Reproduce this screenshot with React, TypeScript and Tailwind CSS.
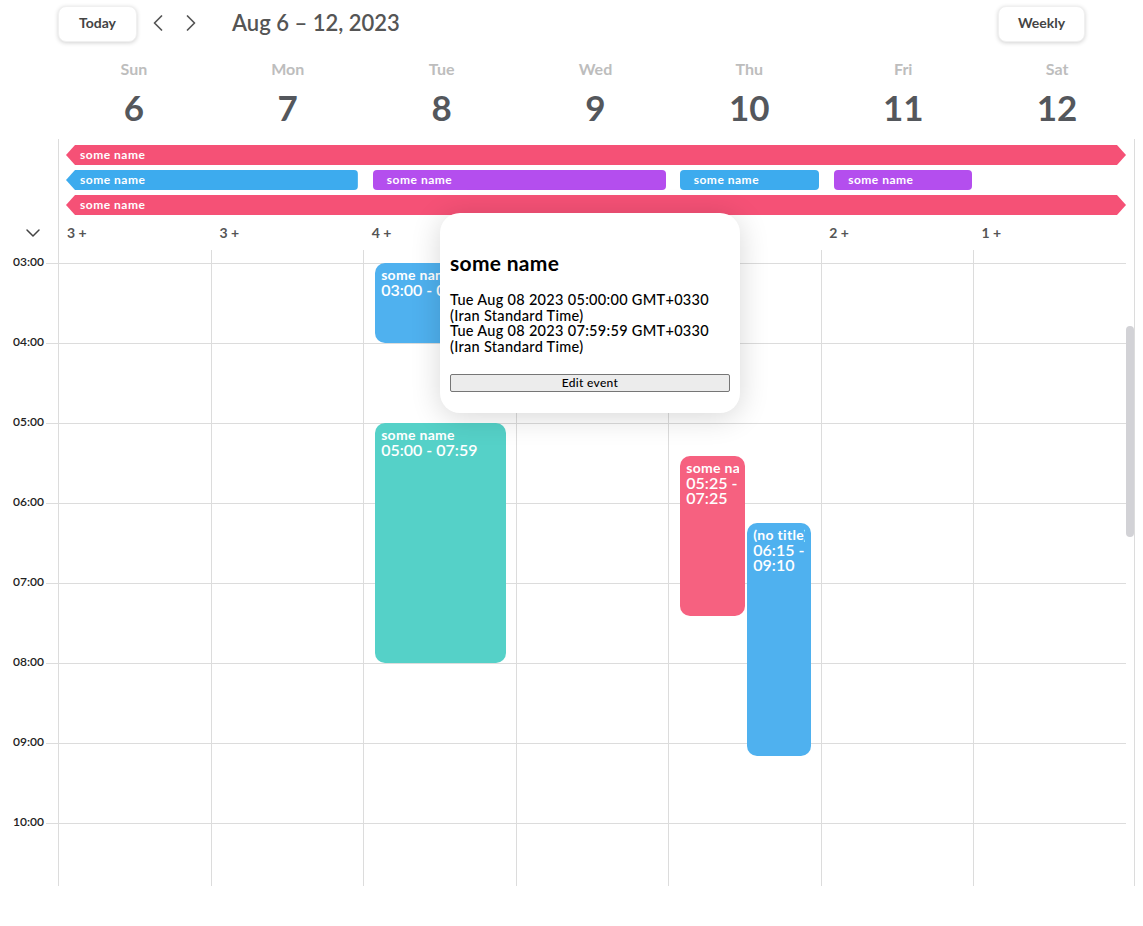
import { useLayoutEffect, useRef } from 'react'
import { ChevronDown, ChevronLeft, ChevronRight } from 'lucide-react'

const days = [
  { name: 'Sun', date: 6 },
  { name: 'Mon', date: 7 },
  { name: 'Tue', date: 8 },
  { name: 'Wed', date: 9 },
  { name: 'Thu', date: 10 },
  { name: 'Fri', date: 11 },
  { name: 'Sat', date: 12 },
]

const moreCounts = [3, 3, 4, 3, 3, 2, 1]

const hours = Array.from({ length: 24 }, (_, i) => `${String(i).padStart(2, '0')}:00`)

interface CalEvent {
  day: number
  title: string
  start: string
  end: string
  color: string
  pos: string
}

const events: CalEvent[] = [
  { day: 2, title: 'some name', start: '03:00', end: '03:59', color: 'bg-[#4fb1ef]', pos: 'left-[11px] right-[10px]' },
  { day: 2, title: 'some name', start: '05:00', end: '07:59', color: 'bg-[#55d1c8]', pos: 'left-[11px] right-[10px]' },
  { day: 4, title: 'some name', start: '05:25', end: '07:25', color: 'bg-[#f66180]', pos: 'left-[11px] w-[65px]' },
  { day: 4, title: '(no title)', start: '06:15', end: '09:10', color: 'bg-[#4fb1ef]', pos: 'left-[78px] right-[10px]' },
]

const HOUR = 80
const toMin = (t: string) => {
  const [h, m] = t.split(':').map(Number)
  return h * 60 + m
}

// arrow ends for multi-week all-day events
const bothArrows =
  '[clip-path:polygon(9px_0,calc(100%_-_9px)_0,100%_50%,calc(100%_-_9px)_100%,9px_100%,0_50%)]'
const leftArrow = '[clip-path:polygon(9px_0,100%_0,100%_100%,9px_100%,0_50%)]'

export default function App() {
  const scrollRef = useRef<HTMLDivElement>(null)

  useLayoutEffect(() => {
    if (scrollRef.current) scrollRef.current.scrollTop = 227
  }, [])

  return (
    <div className="relative w-[1143px] h-[926px] bg-white font-['Lato','Noto_Sans',sans-serif] text-[#555]">
      {/* Header */}
      <div className="flex items-center h-12 pl-[58px] pr-[58px]">
        <button className="w-[79px] h-9 pb-[3px] rounded-lg bg-white shadow-[0_1px_4px_rgba(0,0,0,0.18)] border border-[#f0f0f0] text-[14px] font-bold text-[#444]">
          Today
        </button>
        <ChevronLeft size={28} strokeWidth={1.5} className="ml-[7px] -mt-[2px] text-[#555]" />
        <ChevronRight size={28} strokeWidth={1.5} className="ml-[5px] -mt-[2px] text-[#555]" />
        <h1 className="ml-[27px] -mt-[3px] text-[22px] font-semibold text-[#555]">Aug 6 – 12, 2023</h1>
        <button className="ml-auto w-[87px] h-9 pb-[3px] rounded-lg bg-white shadow-[0_1px_4px_rgba(0,0,0,0.18)] border border-[#f0f0f0] text-[14px] font-bold text-[#444]">
          Weekly
        </button>
      </div>

      {/* Day headings */}
      <div className="w-[1134px] pl-[57px] grid grid-cols-7 pt-[11px] pb-[12px]">
        {days.map((d) => (
          <div key={d.name} className="flex flex-col items-center">
            <span className="text-[16px] leading-5 font-bold text-[#bdbdbd]">{d.name}</span>
            <span className="mt-[8px] text-[35px] leading-10 font-bold text-[#54575c]">{d.date}</span>
          </div>
        ))}
      </div>

      <div className="w-[1135px] border-r border-[#dcdcdc]">
        {/* All-day events */}
        <div className="flex">
          <div className="w-[58px] shrink-0 flex flex-col justify-end">
            <div className="h-[35px] flex items-center justify-center pl-2">
              <ChevronDown size={24} strokeWidth={1.5} className="text-[#444]" />
            </div>
          </div>
          <div className="flex-1 border-l border-[#dcdcdc] pr-2 pt-1.5">
            <div className="grid grid-cols-7 gap-y-[5px] text-[12px] tracking-[0.5px] font-bold text-white">
              <div className={`col-span-7 ml-[7px] h-5 flex items-center pl-[14px] bg-[#f55176] ${bothArrows}`}>
                some name
              </div>
              <div className={`col-span-2 ml-[7px] mr-[6px] h-5 flex items-center pl-[14px] bg-[#3dabee] rounded-r-[4px] ${leftArrow}`}>
                some name
              </div>
              <div className="col-span-2 ml-[9px] mr-[3px] h-5 flex items-center pl-[14px] bg-[#b44eee] rounded-[4px]">
                some name
              </div>
              <div className="ml-[11px] mr-[2px] h-5 flex items-center pl-[14px] bg-[#3dabee] rounded-[4px]">
                some name
              </div>
              <div className="ml-[13px] mr-[2px] h-5 flex items-center pl-[14px] bg-[#b44eee] rounded-[4px]">
                some name
              </div>
              <div className="col-span-1" />
              <div className={`col-span-7 ml-[7px] h-5 flex items-center pl-[14px] bg-[#f55176] ${bothArrows}`}>
                some name
              </div>
            </div>
            <div className="grid grid-cols-7 h-[35px]">
              {moreCounts.map((n, i) => (
                <div key={i} className="pl-[8px] flex items-center text-[14px] font-bold text-[#555]">
                  {n} +
                </div>
              ))}
            </div>
          </div>
        </div>

        {/* Time grid */}
        <div className="flex h-[636px]">
          <div ref={scrollRef} className="w-[1126px] h-full overflow-hidden">
            <div className="flex">
              <div className="w-[58px] shrink-0">
                {hours.map((h) => (
                  <div key={h} className="h-20 flex justify-end items-start">
                    <span className="-mt-[8px] mr-[2px] text-[12px] leading-[14px] font-semibold text-[#222]">{h}</span>
                    <div className="w-3 h-px bg-[#dcdcdc]" />
                  </div>
                ))}
              </div>
              <div className="flex-1 grid grid-cols-7">
                {days.map((d, di) => (
                  <div key={d.name} className="relative border-l border-[#dcdcdc]">
                    {hours.map((h) => (
                      <div key={h} className="h-20 border-t border-[#dcdcdc]" />
                    ))}
                    {events
                      .filter((e) => e.day === di)
                      .map((e, i) => {
                        const s = toMin(e.start)
                        const en = toMin(e.end) + (e.end.endsWith(':59') ? 1 : 0)
                        return (
                          <div
                            key={i}
                            className={`absolute ${e.pos} ${e.color} rounded-[10px] overflow-hidden px-1.5 pt-[5px] text-white`}
                            style={{ top: (s / 60) * HOUR, height: ((en - s) / 60) * HOUR }}
                          >
                            <div className="whitespace-nowrap overflow-hidden text-[14px] tracking-[0.3px] leading-[14px] font-bold">{e.title}</div>
                            <div className="text-[16px] leading-[15px] font-semibold">
                              {e.start} - {e.end}
                            </div>
                          </div>
                        )
                      })}
                  </div>
                ))}
              </div>
            </div>
          </div>
          <div className="w-2 shrink-0">
            <div className="mt-[76px] h-[211px] rounded-full bg-[#d2d2d6]" />
          </div>
        </div>
      </div>

      {/* Event popover */}
      <div className="absolute left-[440px] top-[213px] w-[300px] h-[200px] rounded-[20px] bg-white shadow-[0_4px_30px_rgba(0,0,0,0.16)] px-[10px] pt-[38px] text-black">
        <h2 className="text-[21px] leading-6 tracking-[0.3px] font-bold">some name</h2>
        <div className="mt-[17px] text-[14.5px] leading-[15.5px] tracking-[0.3px] font-medium">
          <div>Tue Aug 08 2023 05:00:00 GMT+0330</div>
          <div>(Iran Standard Time)</div>
          <div>Tue Aug 08 2023 07:59:59 GMT+0330</div>
          <div>(Iran Standard Time)</div>
        </div>
        <button className="mt-[20px] w-full h-[18px] bg-[#ececec] border border-[#767676] rounded-[2px] text-[12px] tracking-[0.3px] leading-none font-medium text-black">
          Edit event
        </button>
      </div>
    </div>
  )
}
